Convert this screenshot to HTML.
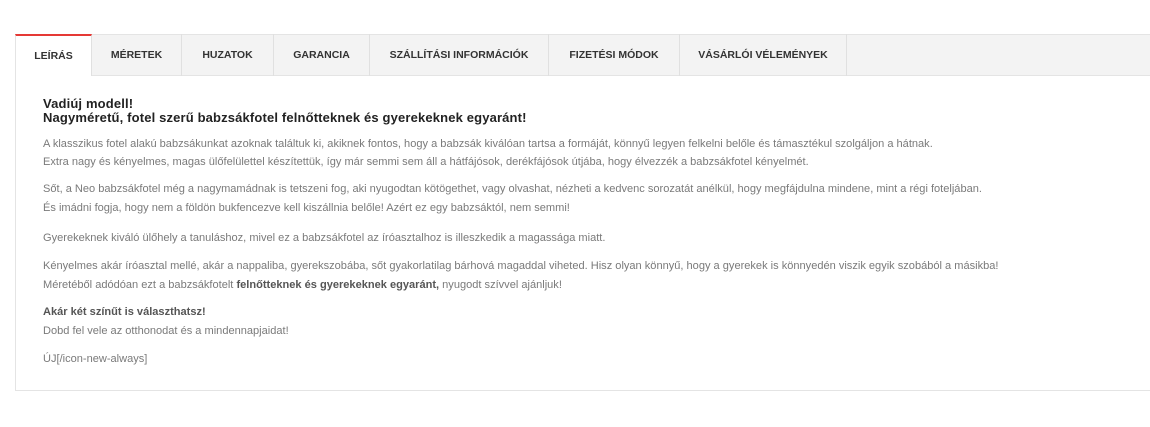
<!DOCTYPE html>
<html><head><meta charset="utf-8"><style>
*{margin:0;padding:0;box-sizing:border-box}
body{width:1150px;height:427px;background:#fff;font-family:"Liberation Sans",sans-serif;position:relative;overflow:hidden}
.bar{position:absolute;left:15px;top:34px;width:1135px;height:42px;background:#f3f3f3;border-top:1px solid #e4e4e4;border-bottom:1px solid #e4e4e4}
.tab{position:absolute;top:34px;height:42px;border-right:1px solid #e0e0e0;font-size:10.5px;font-weight:bold;color:#333;text-align:center;line-height:42px}
.tab.a{background:#fff;border-top:2px solid #e53935;border-left:1px solid #e4e4e4;line-height:40px;height:42px}
.panel{position:absolute;left:15px;top:75px;width:1135px;height:316px;border-left:1px solid #e4e4e4;border-bottom:1px solid #e4e4e4}
.c{position:absolute;left:43px;font-size:11.05px;color:#7a7a7a;white-space:nowrap}
.h{position:absolute;left:43px;font-size:13px;font-weight:bold;color:#222;white-space:nowrap;letter-spacing:0.15px}
b{color:#555}
</style></head><body>
<div class="bar"></div>
<div class="panel"></div>
<div class="tab a" style="left:15px;width:77px">LEÍRÁS</div>
<div class="tab" style="left:92px;width:90px">MÉRETEK</div>
<div class="tab" style="left:182px;width:92px">HUZATOK</div>
<div class="tab" style="left:274px;width:96px">GARANCIA</div>
<div class="tab" style="left:370px;width:179px">SZÁLLÍTÁSI INFORMÁCIÓK</div>
<div class="tab" style="left:549px;width:131px">FIZETÉSI MÓDOK</div>
<div class="tab" style="left:680px;width:167px">VÁSÁRLÓI VÉLEMÉNYEK</div>
<div class="h" style="top:96px">Vadiúj modell!</div>
<div class="h" style="top:110px">Nagyméretű, fotel szerű babzsákfotel felnőtteknek és gyerekeknek egyaránt!</div>
<div class="c" style="top:138px">A klasszikus fotel alakú babzsákunkat azoknak találtuk ki, akiknek fontos, hogy a babzsák kiválóan tartsa a formáját, könnyű legyen felkelni belőle és támasztékul szolgáljon a hátnak.</div>
<div class="c" style="top:156px">Extra nagy és kényelmes, magas ülőfelülettel készítettük, így már semmi sem áll a hátfájósok, derékfájósok útjába, hogy élvezzék a babzsákfotel kényelmét.</div>
<div class="c" style="top:183px">Sőt, a Neo babzsákfotel még a nagymamádnak is tetszeni fog, aki nyugodtan kötögethet, vagy olvashat, nézheti a kedvenc sorozatát anélkül, hogy megfájdulna mindene, mint a régi foteljában.</div>
<div class="c" style="top:202px">És imádni fogja, hogy nem a földön bukfencezve kell kiszállnia belőle! Azért ez egy babzsáktól, nem semmi!</div>
<div class="c" style="top:232px">Gyerekeknek kiváló ülőhely a tanuláshoz, mivel ez a babzsákfotel az íróasztalhoz is illeszkedik a magassága miatt.</div>
<div class="c" style="top:260px">Kényelmes akár íróasztal mellé, akár a nappaliba, gyerekszobába, sőt gyakorlatilag bárhová magaddal viheted. Hisz olyan könnyű, hogy a gyerekek is könnyedén viszik egyik szobából a másikba!</div>
<div class="c" style="top:279px">Méretéből adódóan ezt a babzsákfotelt <b>felnőtteknek és gyerekeknek egyaránt,</b> nyugodt szívvel ajánljuk!</div>
<div class="c" style="top:306px"><b>Akár két színűt is választhatsz!</b></div>
<div class="c" style="top:325px">Dobd fel vele az otthonodat és a mindennapjaidat!</div>
<div class="c" style="top:353px">ÚJ[/icon-new-always]</div>
</body></html>
